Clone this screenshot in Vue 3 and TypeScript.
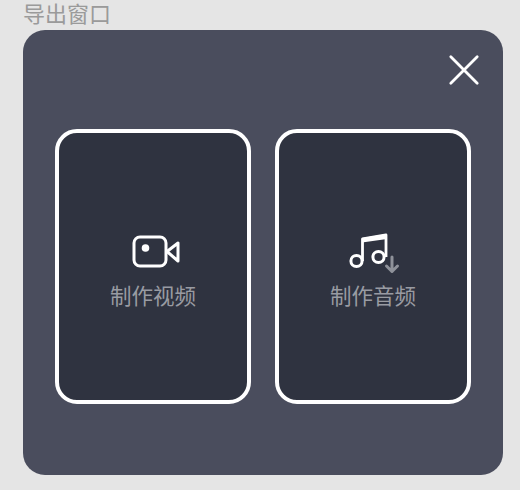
<script setup lang="ts">
const title = '导出窗口'
</script>

<template>
  <div class="page">
    <div class="title">{{ title }}</div>
    <div class="panel">
      <button class="close" aria-label="关闭">
        <svg width="32" height="32" viewBox="0 0 32 32" fill="none">
          <path d="M2.8 2.8 L29.2 29.2 M29.2 2.8 L2.8 29.2" stroke="#fff" stroke-width="2.8" stroke-linecap="round" />
        </svg>
      </button>
      <div class="cards">
        <div class="card">
          <div class="icon-box">
            <svg class="icon video" width="48" height="34" viewBox="0 0 48 34" fill="none">
              <rect x="2" y="2" width="32" height="29" rx="6" stroke="#fff" stroke-width="3" />
              <circle cx="13.5" cy="13" r="3.8" fill="#fff" />
              <path d="M35 16.5 L46 8 V26 Z" stroke="#fff" stroke-width="3" stroke-linejoin="round" />
            </svg>
          </div>
          <div class="label">制作视频</div>
        </div>
        <div class="card">
          <div class="icon-box">
            <svg class="icon music" width="52" height="42" viewBox="0 0 52 42" fill="none">
              <circle cx="8.5" cy="29" r="5.6" stroke="#fff" stroke-width="3" />
              <circle cx="30.5" cy="25" r="5.6" stroke="#fff" stroke-width="3" />
              <path d="M14.5 29 V7 L38 3 V25" stroke="#fff" stroke-width="2.8" stroke-linejoin="round" />
              <path d="M14 10.5 L39 7 V2 L14 6 Z" fill="#fff" />
              <path d="M44 25 V39.5 M38.5 34 L44 39.5 L49.5 34" stroke="#8f929a" stroke-width="3" stroke-linecap="round" stroke-linejoin="round" />
            </svg>
          </div>
          <div class="label">制作音频</div>
        </div>
      </div>
    </div>
  </div>
</template>

<style scoped>
.page {
  width: 520px;
  height: 490px;
  box-sizing: border-box;
  padding-left: 23px;
  background: #e5e5e5;
  font-family: "Noto Sans CJK SC", "Liberation Sans", sans-serif;
  overflow: hidden;
}
.title {
  height: 30px;
  line-height: 24px;
  font-size: 22px;
  color: #9a9a9a;
}
.panel {
  position: relative;
  width: 480px;
  height: 445px;
  box-sizing: border-box;
  padding: 99px 32px 0;
  background: #4a4d5d;
  border-radius: 22px;
}
.close {
  position: absolute;
  top: 24px;
  right: 23px;
  width: 32px;
  height: 32px;
  padding: 0;
  border: 0;
  background: none;
  display: flex;
}
.cards {
  display: flex;
  gap: 24px;
}
.card {
  width: 196px;
  height: 275px;
  box-sizing: border-box;
  padding-top: 99px;
  border: 4px solid #fff;
  border-radius: 22px;
  background: #2f3340;
  display: flex;
  flex-direction: column;
  align-items: center;
}
.icon-box {
  height: 42px;
}
.icon {
  display: block;
}
.video {
  margin: 3px 0 0 6px;
}
.music {
  margin-left: 2px;
}
.label {
  margin-top: 6px;
  font-size: 21.5px;
  line-height: 30px;
  color: #999ba2;
}
</style>
